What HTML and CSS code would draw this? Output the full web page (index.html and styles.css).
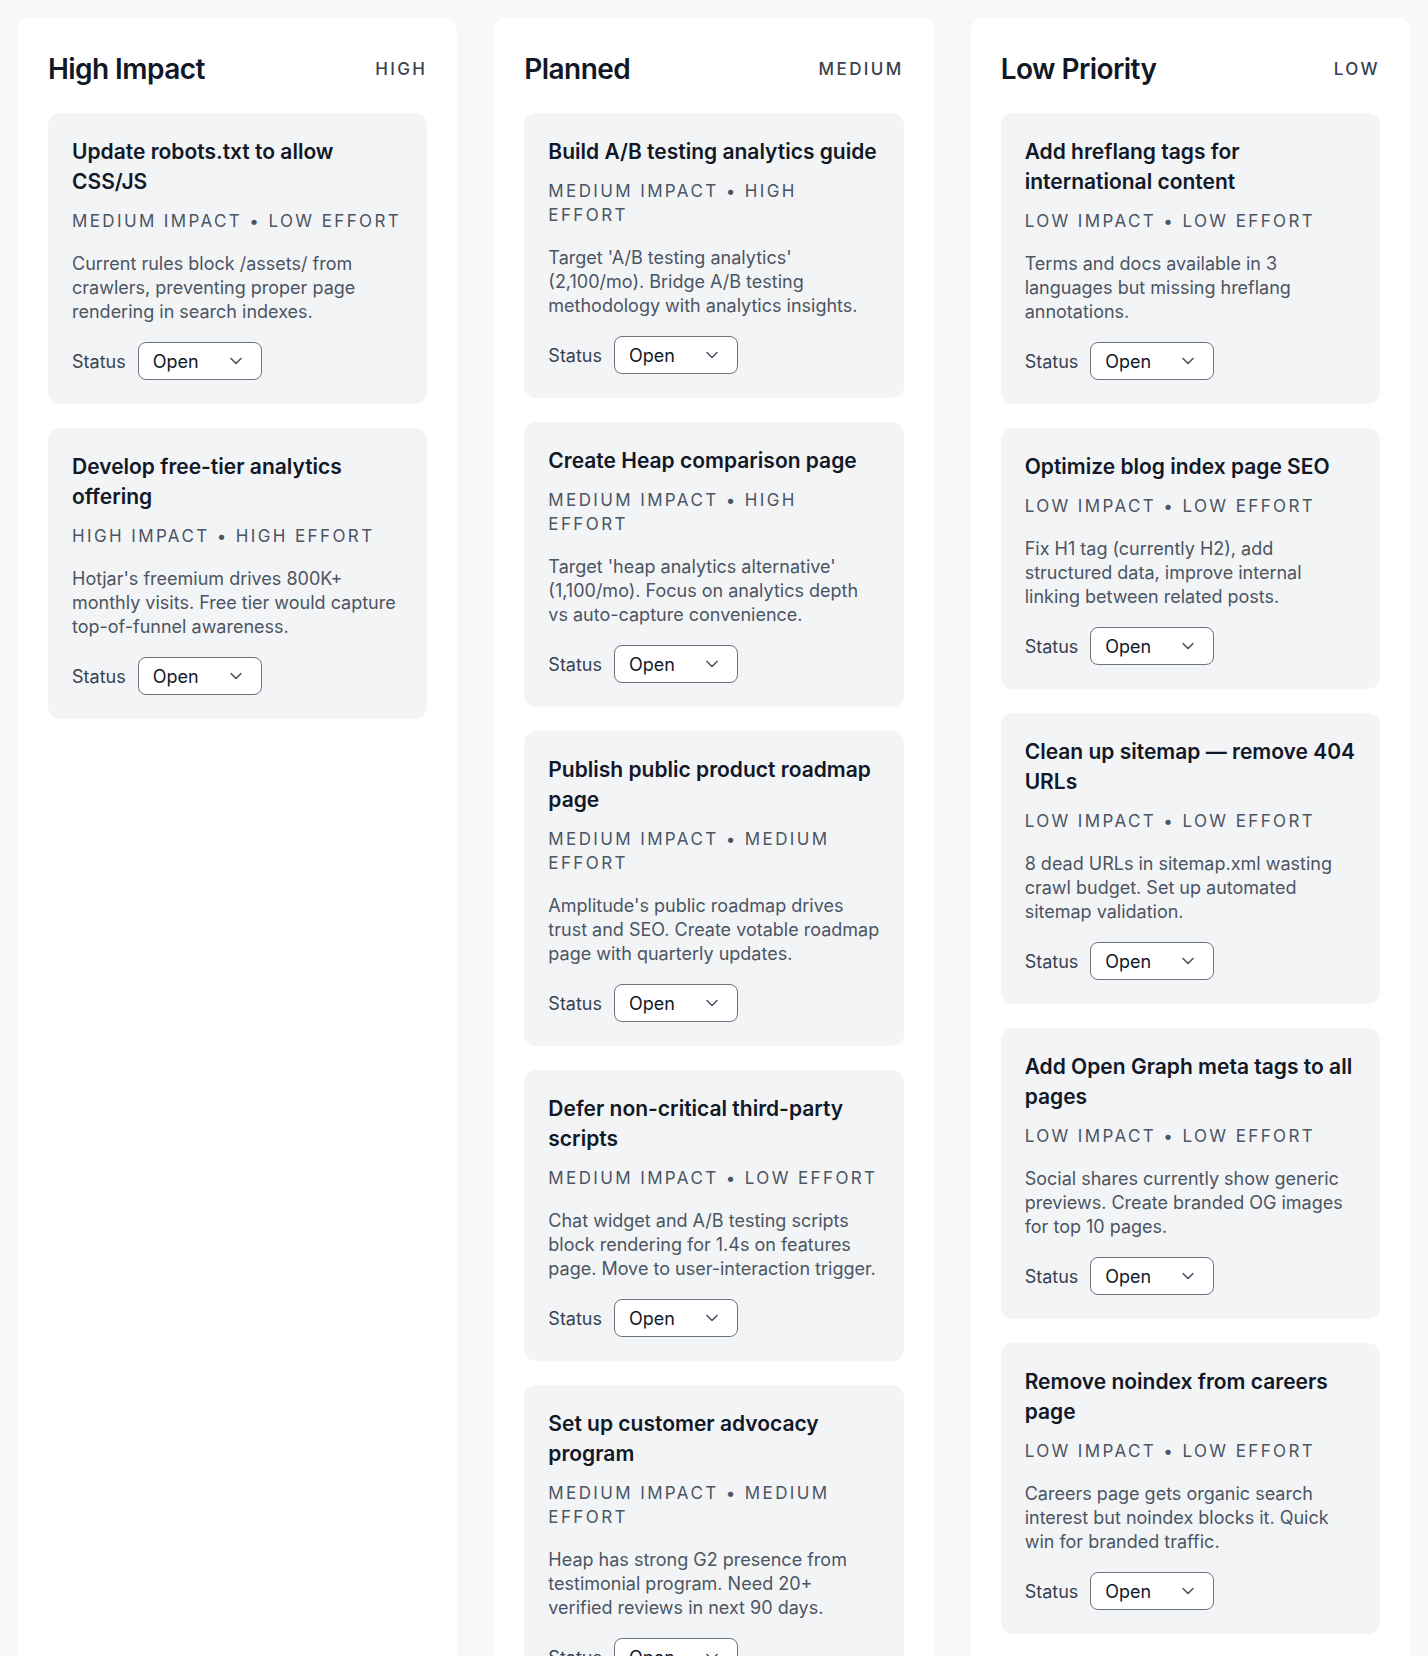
FILE: index.html
```html
<!DOCTYPE html>
<html lang="en">
<head>
    <meta charset="UTF-8">
    <meta name="viewport" content="width=device-width, initial-scale=1.0">
    <title>SEO Roadmap</title>
    <link rel="stylesheet" href="styles.css">
</head>
<body>

    <div class="board">
        <!-- High -->
        <section class="column">
            <div class="column-header">
                <h2 class="column-title">High Impact</h2>
                <span class="column-tag">High</span>
            </div>
            <div class="card">
                <h3 class="card-title">Update robots.txt to allow CSS/JS</h3>
                <p class="card-meta">Medium impact • Low effort</p>
                <p class="card-text">Current rules block /assets/ from crawlers, preventing proper page rendering in search indexes.</p>
                <div class="status">
                    <label class="status-label">Status</label>
                    <div class="select-wrap">
                        <select class="select"><option>Open</option><option>In progress</option><option>Done</option></select>
                        <svg class="chevron" viewBox="0 0 12 8" width="12" height="8"><path d="M1 1.5l5 5 5-5" fill="none" stroke="#4b5563" stroke-width="1.6" stroke-linecap="round" stroke-linejoin="round"/></svg>
                    </div>
                </div>
            </div>
            <div class="card">
                <h3 class="card-title">Develop free-tier analytics offering</h3>
                <p class="card-meta">High impact • High effort</p>
                <p class="card-text">Hotjar's freemium drives 800K+ monthly visits. Free tier would capture top-of-funnel awareness.</p>
                <div class="status">
                    <label class="status-label">Status</label>
                    <div class="select-wrap">
                        <select class="select"><option>Open</option><option>In progress</option><option>Done</option></select>
                        <svg class="chevron" viewBox="0 0 12 8" width="12" height="8"><path d="M1 1.5l5 5 5-5" fill="none" stroke="#4b5563" stroke-width="1.6" stroke-linecap="round" stroke-linejoin="round"/></svg>
                    </div>
                </div>
            </div>
        </section>

        <!-- Medium -->
        <section class="column">
            <div class="column-header">
                <h2 class="column-title">Planned</h2>
                <span class="column-tag">Medium</span>
            </div>
            <div class="card">
                <h3 class="card-title">Build A/B testing analytics guide</h3>
                <p class="card-meta">Medium impact • High effort</p>
                <p class="card-text">Target 'A/B testing analytics' (2,100/mo). Bridge A/B testing methodology with analytics insights.</p>
                <div class="status">
                    <label class="status-label">Status</label>
                    <div class="select-wrap">
                        <select class="select"><option>Open</option><option>In progress</option><option>Done</option></select>
                        <svg class="chevron" viewBox="0 0 12 8" width="12" height="8"><path d="M1 1.5l5 5 5-5" fill="none" stroke="#4b5563" stroke-width="1.6" stroke-linecap="round" stroke-linejoin="round"/></svg>
                    </div>
                </div>
            </div>
            <div class="card">
                <h3 class="card-title">Create Heap comparison page</h3>
                <p class="card-meta">Medium impact • High effort</p>
                <p class="card-text">Target 'heap analytics alternative' (1,100/mo). Focus on analytics depth vs auto-capture convenience.</p>
                <div class="status">
                    <label class="status-label">Status</label>
                    <div class="select-wrap">
                        <select class="select"><option>Open</option><option>In progress</option><option>Done</option></select>
                        <svg class="chevron" viewBox="0 0 12 8" width="12" height="8"><path d="M1 1.5l5 5 5-5" fill="none" stroke="#4b5563" stroke-width="1.6" stroke-linecap="round" stroke-linejoin="round"/></svg>
                    </div>
                </div>
            </div>
            <div class="card">
                <h3 class="card-title">Publish public product roadmap page</h3>
                <p class="card-meta">Medium impact • Medium effort</p>
                <p class="card-text">Amplitude's public roadmap drives trust and SEO. Create votable roadmap page with quarterly updates.</p>
                <div class="status">
                    <label class="status-label">Status</label>
                    <div class="select-wrap">
                        <select class="select"><option>Open</option><option>In progress</option><option>Done</option></select>
                        <svg class="chevron" viewBox="0 0 12 8" width="12" height="8"><path d="M1 1.5l5 5 5-5" fill="none" stroke="#4b5563" stroke-width="1.6" stroke-linecap="round" stroke-linejoin="round"/></svg>
                    </div>
                </div>
            </div>
            <div class="card">
                <h3 class="card-title">Defer non-critical third-party scripts</h3>
                <p class="card-meta">Medium impact • Low effort</p>
                <p class="card-text">Chat widget and A/B testing scripts block rendering for 1.4s on features page. Move to user-interaction trigger.</p>
                <div class="status">
                    <label class="status-label">Status</label>
                    <div class="select-wrap">
                        <select class="select"><option>Open</option><option>In progress</option><option>Done</option></select>
                        <svg class="chevron" viewBox="0 0 12 8" width="12" height="8"><path d="M1 1.5l5 5 5-5" fill="none" stroke="#4b5563" stroke-width="1.6" stroke-linecap="round" stroke-linejoin="round"/></svg>
                    </div>
                </div>
            </div>
            <div class="card">
                <h3 class="card-title">Set up customer advocacy program</h3>
                <p class="card-meta">Medium impact • Medium effort</p>
                <p class="card-text">Heap has strong G2 presence from testimonial program. Need 20+ verified reviews in next 90 days.</p>
                <div class="status">
                    <label class="status-label">Status</label>
                    <div class="select-wrap">
                        <select class="select"><option>Open</option><option>In progress</option><option>Done</option></select>
                        <svg class="chevron" viewBox="0 0 12 8" width="12" height="8"><path d="M1 1.5l5 5 5-5" fill="none" stroke="#4b5563" stroke-width="1.6" stroke-linecap="round" stroke-linejoin="round"/></svg>
                    </div>
                </div>
            </div>
        </section>

        <!-- Low -->
        <section class="column">
            <div class="column-header">
                <h2 class="column-title">Low Priority</h2>
                <span class="column-tag">Low</span>
            </div>
            <div class="card">
                <h3 class="card-title">Add hreflang tags for international content</h3>
                <p class="card-meta">Low impact • Low effort</p>
                <p class="card-text">Terms and docs available in 3 languages but missing hreflang annotations.</p>
                <div class="status">
                    <label class="status-label">Status</label>
                    <div class="select-wrap">
                        <select class="select"><option>Open</option><option>In progress</option><option>Done</option></select>
                        <svg class="chevron" viewBox="0 0 12 8" width="12" height="8"><path d="M1 1.5l5 5 5-5" fill="none" stroke="#4b5563" stroke-width="1.6" stroke-linecap="round" stroke-linejoin="round"/></svg>
                    </div>
                </div>
            </div>
            <div class="card">
                <h3 class="card-title">Optimize blog index page SEO</h3>
                <p class="card-meta">Low impact • Low effort</p>
                <p class="card-text">Fix H1 tag (currently H2), add structured data, improve internal linking between related posts.</p>
                <div class="status">
                    <label class="status-label">Status</label>
                    <div class="select-wrap">
                        <select class="select"><option>Open</option><option>In progress</option><option>Done</option></select>
                        <svg class="chevron" viewBox="0 0 12 8" width="12" height="8"><path d="M1 1.5l5 5 5-5" fill="none" stroke="#4b5563" stroke-width="1.6" stroke-linecap="round" stroke-linejoin="round"/></svg>
                    </div>
                </div>
            </div>
            <div class="card">
                <h3 class="card-title">Clean up sitemap — remove 404 URLs</h3>
                <p class="card-meta">Low impact • Low effort</p>
                <p class="card-text">8 dead URLs in sitemap.xml wasting crawl budget. Set up automated sitemap validation.</p>
                <div class="status">
                    <label class="status-label">Status</label>
                    <div class="select-wrap">
                        <select class="select"><option>Open</option><option>In progress</option><option>Done</option></select>
                        <svg class="chevron" viewBox="0 0 12 8" width="12" height="8"><path d="M1 1.5l5 5 5-5" fill="none" stroke="#4b5563" stroke-width="1.6" stroke-linecap="round" stroke-linejoin="round"/></svg>
                    </div>
                </div>
            </div>
            <div class="card">
                <h3 class="card-title">Add Open Graph meta tags to all pages</h3>
                <p class="card-meta">Low impact • Low effort</p>
                <p class="card-text">Social shares currently show generic previews. Create branded OG images for top 10 pages.</p>
                <div class="status">
                    <label class="status-label">Status</label>
                    <div class="select-wrap">
                        <select class="select"><option>Open</option><option>In progress</option><option>Done</option></select>
                        <svg class="chevron" viewBox="0 0 12 8" width="12" height="8"><path d="M1 1.5l5 5 5-5" fill="none" stroke="#4b5563" stroke-width="1.6" stroke-linecap="round" stroke-linejoin="round"/></svg>
                    </div>
                </div>
            </div>
            <div class="card">
                <h3 class="card-title">Remove noindex from careers page</h3>
                <p class="card-meta">Low impact • Low effort</p>
                <p class="card-text">Careers page gets organic search interest but noindex blocks it. Quick win for branded traffic.</p>
                <div class="status">
                    <label class="status-label">Status</label>
                    <div class="select-wrap">
                        <select class="select"><option>Open</option><option>In progress</option><option>Done</option></select>
                        <svg class="chevron" viewBox="0 0 12 8" width="12" height="8"><path d="M1 1.5l5 5 5-5" fill="none" stroke="#4b5563" stroke-width="1.6" stroke-linecap="round" stroke-linejoin="round"/></svg>
                    </div>
                </div>
            </div>
        </section>
    </div>

</body>
</html>
```

FILE: styles.css
```css
* {
    box-sizing: border-box;
}
body {
    margin: 0;
    font-family: Inter, "Noto Sans", sans-serif;
    background-color: #f7f8fa;
    color: #111827;
}
.board {
    display: grid;
    grid-template-columns: repeat(3, 1fr);
    gap: 37px;
    padding: 17px 18px;
}
.column {
    background-color: #ffffff;
    border-radius: 14px;
    padding: 32px 30px 30px;
    display: flex;
    flex-direction: column;
    gap: 24px;
}
.column-header {
    display: flex;
    justify-content: space-between;
    align-items: center;
    height: 40px;
}
.column-title {
    margin: 0;
    font-size: 28px;
    font-weight: 600;
    letter-spacing: -0.02em;
    color: #111827;
}
.column-tag {
    font-size: 17px;
    font-weight: 500;
    letter-spacing: 0.14em;
    text-transform: uppercase;
    color: #374151;
}
.card {
    background-color: #f3f4f6;
    border-radius: 12px;
    padding: 24px;
}
.card-title {
    margin: 0;
    font-size: 21px;
    font-weight: 600;
    line-height: 30px;
    color: #111827;
}
.card-meta {
    margin: 12px 0 0;
    font-size: 17px;
    line-height: 24px;
    letter-spacing: 0.14em;
    text-transform: uppercase;
    color: #4b5563;
}
.card-text {
    margin: 19px 0 0;
    font-size: 18px;
    line-height: 24px;
    color: #4b5563;
}
.status {
    display: flex;
    align-items: center;
    gap: 12px;
    margin-top: 18px;
}
.status-label {
    font-size: 18px;
    color: #374151;
}
.select-wrap {
    position: relative;
    width: 124px;
}
.select {
    appearance: none;
    -webkit-appearance: none;
    display: block;
    width: 100%;
    height: 38px;
    padding: 0 36px 0 14px;
    border: 1.5px solid #6b7280;
    border-radius: 8px;
    background-color: #ffffff;
    font-family: inherit;
    font-size: 18px;
    color: #111827;
}
.chevron {
    position: absolute;
    right: 20px;
    top: 15px;
    pointer-events: none;
}
```
